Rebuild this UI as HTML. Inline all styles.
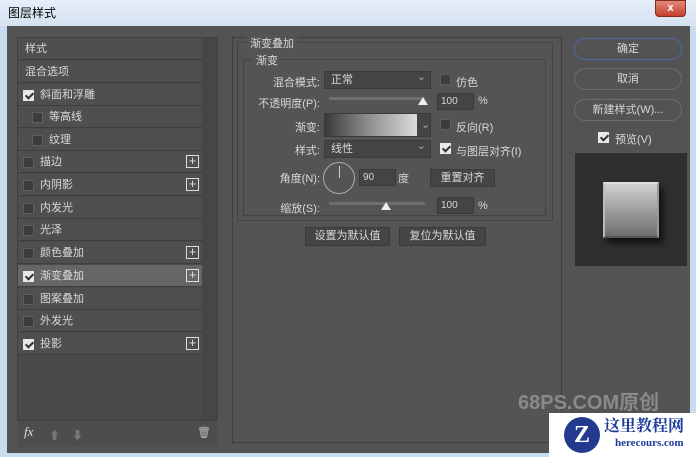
<!DOCTYPE html><html><head><meta charset="utf-8"><style>
*{margin:0;padding:0;box-sizing:border-box}
body{width:696px;height:457px;overflow:hidden;background:#c9dcef;font-family:"Liberation Sans","Noto Sans CJK SC",sans-serif;font-size:11px;color:#d8d8d8;position:relative}
.abs{position:absolute}
#title{left:0;top:0;width:696px;height:26px;background:linear-gradient(#e6eef8,#d6e3f1);color:#000;font-size:12px;padding:4px 0 0 8px}
#close{left:655px;top:0;width:31px;height:17px;background:linear-gradient(#e08a7a,#c4412e);border:1px solid #8a2a1d;border-radius:0 0 4px 4px;color:#fff;font-weight:bold;text-align:center;font-size:11px;line-height:15px}
#body{left:7px;top:26px;width:683px;height:427px;background:#535353}
#left{left:17px;top:37px;width:201px;height:384px;background:#4a4a4a;border:1px solid #3f3f3f}
.row{position:absolute;left:18px;width:184px;height:22px;border-bottom:1px solid #3e3e3e;background:#4f4f4f;line-height:22px}
.row.sel{background:#666}
.cb{position:absolute;top:6px;width:11px;height:11px;background:#3d3d3d;border:1px solid #5e5e5e}
.cb.on{background:#e8e8e8;border-color:#e8e8e8}
.cb.on:after{content:"";position:absolute;left:3px;top:0px;width:3px;height:6px;border:solid #333;border-width:0 2px 2px 0;transform:rotate(45deg)}
.plus{position:absolute;left:168px;top:4px;width:13px;height:13px;border:1px solid #ddd;color:#ddd;font-size:13px;line-height:10px;text-align:center}
#scroll{left:202px;top:38px;width:15px;height:382px;background:#464646}
#mid{left:232px;top:37px;width:330px;height:406px;border:1px solid #3e3e3e;background:#545454}
.fs{border:1px solid #444;position:absolute}
.leg{position:absolute;background:#545454;padding:0 4px;font-size:11px}
.lbl{position:absolute;text-align:right;width:80px;font-size:11px}
.sel2{position:absolute;height:18px;background:#444;border:1px solid #3a3a3a;padding-left:6px;line-height:16px}
.sel2:after{content:"⌄";position:absolute;right:4px;top:-3px;color:#aaa}
.inp{position:absolute;height:17px;background:#444;border:1px solid #3a3a3a;padding-left:3px;line-height:15px;font-size:10px}
.btn{position:absolute;height:18px;background:#454545;border:1px solid #3a3a3a;text-align:center;line-height:16px}
.track{position:absolute;height:3px;background:#6f6f6f;border-radius:2px}
.thumb{position:absolute;width:0;height:0;border-left:5px solid transparent;border-right:5px solid transparent;border-bottom:8px solid #eee}
.rb{position:absolute;left:574px;width:108px;height:22px;border:1px solid #6e6e6e;border-radius:11px;text-align:center;line-height:20px;background:#535353}
</style></head><body>
<div id="title" class="abs">图层样式</div>
<div id="close" class="abs">x</div>
<div id="body" class="abs"></div>
<div id="left" class="abs"></div>
<div id="scroll" class="abs"></div>
<div class="row" style="top:38px"><span style="margin-left:7px">样式</span></div>
<div class="row" style="top:61px"><span style="margin-left:7px">混合选项</span></div>
<div class="row" style="top:84px"><div class="cb on" style="left:5px"></div><span style="margin-left:22px">斜面和浮雕</span></div>
<div class="row" style="top:106px"><div class="cb" style="left:14px"></div><span style="margin-left:31px">等高线</span></div>
<div class="row" style="top:129px"><div class="cb" style="left:14px"></div><span style="margin-left:31px">纹理</span></div>
<div class="row" style="top:151px"><div class="cb" style="left:5px"></div><span style="margin-left:22px">描边</span><div class="plus">+</div></div>
<div class="row" style="top:174px"><div class="cb" style="left:5px"></div><span style="margin-left:22px">内阴影</span><div class="plus">+</div></div>
<div class="row" style="top:197px"><div class="cb" style="left:5px"></div><span style="margin-left:22px">内发光</span></div>
<div class="row" style="top:219px"><div class="cb" style="left:5px"></div><span style="margin-left:22px">光泽</span></div>
<div class="row" style="top:242px"><div class="cb" style="left:5px"></div><span style="margin-left:22px">颜色叠加</span><div class="plus">+</div></div>
<div class="row sel" style="top:265px"><div class="cb on" style="left:5px"></div><span style="margin-left:22px">渐变叠加</span><div class="plus">+</div></div>
<div class="row" style="top:288px"><div class="cb" style="left:5px"></div><span style="margin-left:22px">图案叠加</span></div>
<div class="row" style="top:310px"><div class="cb" style="left:5px"></div><span style="margin-left:22px">外发光</span></div>
<div class="row" style="top:333px"><div class="cb on" style="left:5px"></div><span style="margin-left:22px">投影</span><div class="plus">+</div></div>
<div class="abs" style="left:18px;top:421px;width:199px;height:26px;background:#4d4d4d"></div>
<div class="abs" style="left:24px;top:424px;font-style:italic;font-family:'Liberation Serif',serif;font-size:13px;color:#ddd">fx</div>
<div class="abs" style="left:49px;top:427px;color:#777;font-size:11px">⬆</div>
<div class="abs" style="left:72px;top:427px;color:#777;font-size:11px">⬇</div>
<div class="abs" style="left:197px;top:426px;color:#bbb;font-size:11px">🗑</div>

<div id="mid" class="abs"></div>
<div class="fs" style="left:237px;top:42px;width:316px;height:179px"></div>
<div class="leg" style="left:246px;top:35px">渐变叠加</div>
<div class="fs" style="left:243px;top:59px;width:303px;height:157px"></div>
<div class="leg" style="left:252px;top:52px">渐变</div>
<div class="lbl" style="left:240px;top:74px">混合模式:</div>
<div class="sel2" style="left:324px;top:71px;width:107px">正常</div>
<div class="cb" style="left:440px;top:74px"></div><div class="abs" style="left:456px;top:74px">仿色</div>
<div class="lbl" style="left:240px;top:95px">不透明度(P):</div>
<div class="track" style="left:329px;top:97px;width:96px"></div><div class="thumb" style="left:418px;top:97px"></div>
<div class="inp" style="left:437px;top:93px;width:37px">100</div><div class="abs" style="left:478px;top:95px">%</div>
<div class="lbl" style="left:240px;top:119px">渐变:</div>
<div class="abs" style="left:324px;top:113px;width:107px;height:24px;border:1px solid #3a3a3a;background:#444"></div>
<div class="abs" style="left:325px;top:114px;width:92px;height:22px;background:linear-gradient(90deg,#3a3a3a,#8a8a8a 45%,#dcdcdc)"></div>
<div class="abs" style="left:421px;top:118px;color:#aaa">⌄</div>
<div class="cb" style="left:440px;top:119px"></div><div class="abs" style="left:456px;top:119px">反向(R)</div>
<div class="lbl" style="left:240px;top:142px">样式:</div>
<div class="sel2" style="left:324px;top:140px;width:107px">线性</div>
<div class="cb on" style="left:440px;top:143px"></div><div class="abs" style="left:456px;top:143px">与图层对齐(I)</div>
<div class="lbl" style="left:240px;top:170px">角度(N):</div>
<div class="abs" style="left:323px;top:162px;width:32px;height:32px;border:1px solid #aaa;border-radius:50%"></div>
<div class="abs" style="left:339px;top:166px;width:1px;height:12px;background:#ccc"></div>
<div class="inp" style="left:359px;top:169px;width:37px">90</div><div class="abs" style="left:398px;top:170px">度</div>
<div class="btn" style="left:430px;top:169px;width:65px">重置对齐</div>
<div class="lbl" style="left:240px;top:200px">缩放(S):</div>
<div class="track" style="left:329px;top:202px;width:96px"></div><div class="thumb" style="left:381px;top:202px"></div>
<div class="inp" style="left:437px;top:197px;width:37px">100</div><div class="abs" style="left:478px;top:200px">%</div>
<div class="btn" style="left:305px;top:227px;width:85px;height:19px">设置为默认值</div>
<div class="btn" style="left:399px;top:227px;width:87px;height:19px">复位为默认值</div>

<div class="rb" style="top:38px;border-color:#4a6aa5">确定</div>
<div class="rb" style="top:68px">取消</div>
<div class="rb" style="top:99px">新建样式(W)...</div>
<div class="cb on" style="left:598px;top:132px"></div><div class="abs" style="left:615px;top:131px">预览(V)</div>
<div class="abs" style="left:575px;top:153px;width:112px;height:113px;background:#2f2f2f"></div>
<div class="abs" style="left:603px;top:182px;width:56px;height:56px;background:linear-gradient(#d0d0d0,#6e6e6e);border:2px solid #999;border-top-color:#e0e0e0;border-left-color:#bbb;border-bottom-color:#555;box-shadow:4px 5px 6px #111"></div>

<div class="abs" style="left:518px;top:386px;font-size:20px;font-weight:bold;color:#8a8a8a;font-family:'Liberation Sans','Noto Sans CJK SC',sans-serif">68PS.COM原创</div>
<div class="abs" style="left:549px;top:413px;width:147px;height:44px;background:#fff"></div>
<div class="abs" style="left:564px;top:417px;width:36px;height:36px;border-radius:50%;background:#233a8e;color:#fff;font-weight:bold;font-size:24px;text-align:center;line-height:36px;font-family:'Liberation Serif',serif">Z</div>
<div class="abs" style="left:604px;top:413px;font-family:'Noto Serif CJK SC',serif;font-weight:bold;font-size:16px;color:#1c3a9c">这里教程网</div>
<div class="abs" style="left:615px;top:437px;font-family:'Liberation Serif',serif;font-weight:bold;font-size:11px;color:#1c3a9c">herecours.com</div>
</body></html>
